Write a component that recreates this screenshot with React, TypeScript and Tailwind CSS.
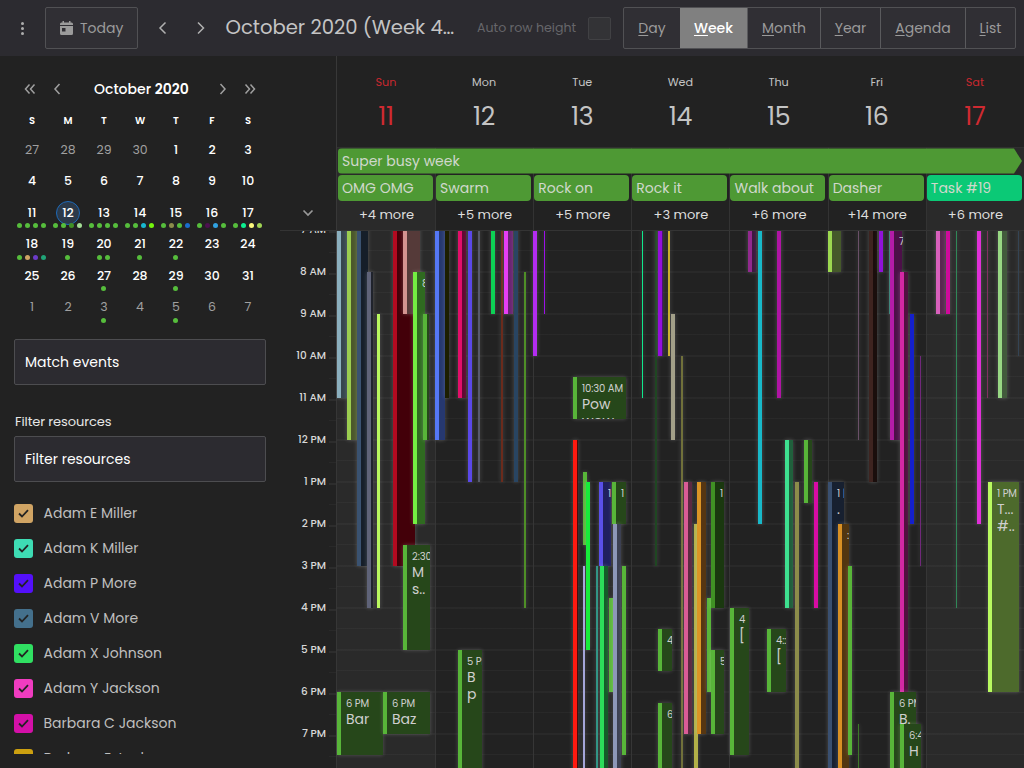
import React from "react";

type Ev = [number, number, number, number, number, string, string, string?, string?];

const G = "#58b539";
const D = "#26471a";

// left edge, bar width, total width, start hour, end hour, bar colour, fill colour, time, title
const events: Ev[] = [
  [1, 4, 10, 6.9, 11, "#8bafbe", "#36454d"],
  [11, 4, 10, 6.9, 12, "#9bcd50", "#4b582b"],
  [21, 4, 11, 6.9, 15, "#3a5270", "#151e29"],
  [31, 4, 6, 8, 16, "#5f6378", "#20232c"],
  [41, 3, 3, 9, 16, "#b9f75f", "#b9f75f"],
  [57, 4, 22, 6.9, 15, "#b40a20", "#430009"],
  [67, 4, 17, 6.9, 9, "#d49390", "#553a39"],
  [77, 4, 12, 8, 14, "#74ee42", "#2f6a20", "8"],
  [87, 4, 6, 9, 12, G, D],
  [99, 4, 10, 6.9, 12, "#5578f5", "#263870"],
  [109, 4, 4, 6.9, 11, "#1c1e00", "#1c1e00"],
  [122, 4, 8, 6.9, 11, "#e20f6a", "#5f0a33"],
  [132, 4, 4, 6.9, 13, "#5a48e8", "#24205f"],
  [142, 2, 2, 6.9, 13, "#575a6c", "#575a6c"],
  [155, 4, 4, 6.9, 9, "#0dd155", "#0dd155"],
  [165, 2, 2, 6.9, 13, "#6b2b1c", "#6b2b1c"],
  [168, 4, 9, 6.9, 9, "#e63ef5", "#6a2472"],
  [178, 4, 4, 6.9, 13, "#294562", "#294562"],
  [188, 2, 2, 8, 16, "#4f8f27", "#4f8f27"],
  [197, 4, 4, 6.9, 10, "#b32df0", "#b32df0"],
  [207.5, 1.5, 1.5, 6.9, 9, "#9b10e8", "#9b10e8"],
  [237, 4, 53, 10.5, 11.5, G, D, "10:30 AM", "Pow wow"],
  [237, 4, 5, 12, 21, "#ff1a10", "#4a0c0c"],
  [247, 4, 4, 12.75, 14.5, G, G],
  [247, 2, 2, 15, 21, "#a3a5d8", "#a3a5d8"],
  [250, 4, 4, 13, 17, "#17ec3a", "#17ec3a"],
  [260, 2, 2, 15, 21, "#2f9484", "#2f9484"],
  [263, 4, 12, 13, 15, "#5a50e8", "#20205f", "1"],
  [263.5, 4, 8.5, 15, 21, "#2cde5a", "#145c28"],
  [273, 4, 4, 15.75, 18, G, G],
  [276, 4, 14, 13, 14, G, D, "1"],
  [276.5, 4, 8.5, 14, 21, "#8d97b8", "#3c4052"],
  [286, 4, 4, 15, 19.5, G, G],
  [306, 1, 1, 6.9, 11, "#10e88c", "#10e88c"],
  [319, 2, 2, 6.9, 15, "#1f4722", "#1f4722"],
  [321.5, 4, 5, 6.9, 10, "#9310dc", "#471370"],
  [332, 2, 2, 6.9, 10, "#c9b02a", "#c9b02a"],
  [335, 4, 4, 9, 12, "#a29f88", "#a29f88"],
  [345, 2, 2, 10, 21, "#70703a", "#70703a"],
  [348, 4, 8, 13, 19, "#d95c96", "#5b2a42"],
  [358, 4, 4, 14, 21, "#b2b048", "#b2b048"],
  [361, 4, 9, 13, 19, "#dc9526", "#563612"],
  [371, 4, 4, 15.75, 18, G, G],
  [375, 4, 13, 13, 16, "#409124", "#1a380f", "1"],
  [375, 4, 13, 17, 19, G, D, "5"],
  [322, 4, 14, 16.5, 17.5, G, D, "4:30"],
  [322, 4, 14, 18.25, 21, G, D, "6:15"],
  [412, 4, 8, 6.9, 8, "#912a8e", "#3d1a40"],
  [422, 4, 4, 6.9, 14, "#18b8c8", "#18b8c8"],
  [441, 4, 4, 6.9, 11, "#b014a4", "#b014a4"],
  [449, 4, 8, 12, 16, "#3ee090", "#20603c"],
  [459, 4, 4, 13, 21, "#8c8c4a", "#8c8c4a"],
  [468, 4, 8, 12, 13.5, G, D],
  [478, 4, 4, 13, 16, "#d80ca4", "#d80ca4"],
  [394, 4, 19, 16, 19.5, G, D, "4", "["],
  [431, 4, 19, 16.5, 18, G, D, "4::", "["],
  [492, 4, 13, 6.9, 8, "#9cd850", "#45592a"],
  [522, 1, 1, 6.9, 12, "#6a5068", "#6a5068"],
  [533, 4, 8, 6.9, 13, "#3e2420", "#1a0e0c"],
  [543, 4, 4, 6.9, 8, "#9012d8", "#9012d8"],
  [553, 1, 1, 6.9, 9, "#2f7a70", "#2f7a70"],
  [554, 4, 12, 6.9, 12, "#b41ca8", "#4c1048"],
  [564, 4, 8, 8, 18, "#d428a4", "#521040"],
  [574, 4, 4, 9, 14, "#1420cc", "#1420cc"],
  [584, 1, 1, 10, 15, "#70287a", "#70287a"],
  [492, 4, 16, 13, 21, "#3a5070", "#172030", "1 |", "."],
  [502, 4, 11, 14, 21, "#d89024", "#523610", ":"],
  [512, 4, 4, 15, 19.5, G, G],
  [522, 1, 1, 18.75, 21, "#3c7828", "#3c7828"],
  [554, 4, 26, 18, 21, G, D, "6 PM", "B."],
  [564, 4, 21, 18.75, 21, G, D, "6:45", "H"],
  [600, 4, 9, 6.9, 9, "#d860bc", "#5a2850"],
  [610, 4, 4, 6.9, 9, "#d00a9c", "#d00a9c"],
  [620, 1, 1, 6.9, 16, "#308858", "#308858"],
  [641, 4, 4, 6.9, 14, "#e030d8", "#e030d8"],
  [651, 1, 1, 6.9, 11, "#803060", "#803060"],
  [662, 4, 9, 6.9, 11, "#98d884", "#425a3c"],
  [682, 1, 1, 6.9, 10, "#344454", "#344454"],
  [652, 4, 31, 13, 18, "#b9fa60", "#4d6a2c", "1 PM", "T...\n#.."],
  [67, 4, 27, 14.5, 17, G, D, "2:30", "M\ns.."],
  [122, 4, 24, 17, 21, G, D, "5 PM", "B\np"],
  [1, 4, 46, 18, 19.5, G, D, "6 PM", "Bar"],
  [47, 4, 47, 18, 19, G, D, "6 PM", "Baz"],
];

const HOUR = 42;

function EventBox({ e }: { e: Ev }) {
  const [x, bar, w, start, end, color, fill, time, title] = e;
  return (
    <div
      className="absolute overflow-hidden text-[#cfcfcf] shadow-[0_0_4px_rgba(255,255,255,0.22)]"
      style={{ left: x, width: w, top: (start - 7) * HOUR, height: (end - start) * HOUR, background: fill, borderLeft: `${bar}px solid ${color}` }}
    >
      {time && (
        <div className="w-max pl-[5px] pt-[4px]">
          <div className="text-[10px] leading-[15px] tracking-[-0.1px]">{time}</div>
          {title && <div className="w-[34px] whitespace-pre-wrap text-[14px] leading-[16.500px]">{title}</div>}
        </div>
      )}
    </div>
  );
}

const N = "#56bd3c";
const weeks: { d: number; out?: boolean; dots?: string[] }[][] = [
  [{ d: 27, out: true }, { d: 28, out: true }, { d: 29, out: true }, { d: 30, out: true }, { d: 1 }, { d: 2 }, { d: 3 }],
  [{ d: 4 }, { d: 5 }, { d: 6 }, { d: 7 }, { d: 8 }, { d: 9 }, { d: 10 }],
  [
    { d: 11, dots: [N, N, N, N] },
    { d: 12, dots: [N, N, "#409124", "#a3dd95"] },
    { d: 13, dots: [N, N, N, N] },
    { d: 14, dots: [N, N, "#18b8d0", "#74f50c"] },
    { d: 15, dots: [N, "#8c8c4a", N, "#1a6dcc"] },
    { d: 16, dots: [N, "#4c1050", "#30a2e0", N] },
    { d: 17, dots: [N, "#0cf090", "#fbf87c", "#a0d354"] },
  ],
  [
    { d: 18, dots: [N, "#d0a464", "#6b3bc8", "#20a478"] },
    { d: 19, dots: [N] },
    { d: 20, dots: [N, N] },
    { d: 21, dots: [N] },
    { d: 22, dots: [N] },
    { d: 23 },
    { d: 24 },
  ],
  [{ d: 25 }, { d: 26 }, { d: 27, dots: [N] }, { d: 28 }, { d: 29, dots: [N] }, { d: 30 }, { d: 31 }],
  [{ d: 1, out: true }, { d: 2, out: true }, { d: 3, out: true, dots: [N] }, { d: 4, out: true }, { d: 5, out: true, dots: [N] }, { d: 6, out: true }, { d: 7, out: true }],
];

const resources = [
  ["Adam E Miller", "#d0a464"],
  ["Adam K Miller", "#3edcb4"],
  ["Adam P More", "#5410fa"],
  ["Adam V More", "#44708c"],
  ["Adam X Johnson", "#30e062"],
  ["Adam Y Jackson", "#f03cc0"],
  ["Barbara C Jackson", "#d410a8"],
  ["Barbara E Jackson", "#cca010"],
];

const days = [
  ["Sun", "11", "OMG OMG", "+4 more"],
  ["Mon", "12", "Swarm", "+5 more"],
  ["Tue", "13", "Rock on", "+5 more"],
  ["Wed", "14", "Rock it", "+3 more"],
  ["Thu", "15", "Walk about", "+6 more"],
  ["Fri", "16", "Dasher", "+14 more"],
  ["Sat", "17", "Task #19", "+6 more"],
];

const views = [
  ["Day", "w-[56px]"],
  ["Week", "w-[67px]"],
  ["Month", "w-[73px]"],
  ["Year", "w-[60px]"],
  ["Agenda", "w-[85px]"],
  ["List", "w-[50px]"],
];

function Chevron({ d, w = 10, className = "" }: { d: string; w?: number; className?: string }) {
  return (
    <svg width={w} height="14" viewBox={`0 0 ${w} 14`} fill="none" stroke="currentColor" strokeWidth="1.5" className={className}>
      <path d={d} />
    </svg>
  );
}

function Toolbar() {
  return (
    <header className="flex h-14 shrink-0 items-center bg-[#2c2b30] text-[#9b9b9b]">
      <div className="ml-[21px] flex w-[3px] flex-col items-center gap-[2px]">
        <i className="size-[3px] rounded-full bg-[#adadad]" />
        <i className="size-[3px] rounded-full bg-[#adadad]" />
        <i className="size-[3px] rounded-full bg-[#adadad]" />
      </div>
      <button className="ml-[21px] flex h-[42px] w-[93px] items-center rounded-[2px] border border-[#515154] bg-[#302f34] pl-[14px] text-[14px]">
        <svg width="13" height="14" viewBox="0 0 13 14" fill="#9b9b9b">
          <path fillRule="evenodd" d="M2.500 0H4v1.500h5V0h1.500v1.500h1A1.500 1.500 0 0 1 13 3v1H0V3a1.500 1.500 0 0 1 1.500-1.500h1zM0 5h13v7.500a1.500 1.500 0 0 1-1.500 1.500h-10A1.500 1.500 0 0 1 0 12.500zM2 7v3.500h3.500V7z" />
        </svg>
        <span className="ml-[7px]">Today</span>
      </button>
      <Chevron d="M7.500 1.500L2 7L7.500 12.500" w={9} className="ml-5 text-[#b0b0b0]" />
      <Chevron d="M2 1.500L7.500 7L2 12.500" w={9} className="ml-[29px] text-[#b0b0b0]" />
      <h1 className="ml-[20.500px] w-[230.500px] whitespace-nowrap text-[19.600px] text-[#c4c4c4]">October 2020 (Week 4…</h1>
      <span className="ml-[21px] w-[100px] whitespace-nowrap text-[12.600px] text-[#66666a]">Auto row height</span>
      <span className="ml-[11px] size-[23px] rounded-[2px] border border-[#414144] bg-[#333336]" />
      <nav className="ml-[12px] flex h-[42px] rounded-[2px] border border-[#515154] bg-[#302f34] text-[14px]">
        {views.map(([v, w], i) => (
          <button
            key={v}
            className={`${w} ${v === "Week" ? "bg-[#808080] font-medium text-white" : ""} ${i > 1 ? "border-l border-[#5a5a5d]" : ""} shrink-0`}
          >
            <span className="underline underline-offset-2">{v[0]}</span>
            {v.slice(1)}
          </button>
        ))}
      </nav>
    </header>
  );
}

function Sidebar() {
  return (
    <aside className="flex w-[280px] shrink-0 flex-col text-white">
      <div className="mt-[23px] flex h-5 items-center text-[#a0a0a0]">
        <Chevron d="M5.500 2.500L1.500 7L5.500 11.500M10.500 2.500L6.500 7L10.500 11.500" w={12} className="ml-6" />
        <Chevron d="M6.500 2L2 7L6.500 12" w={8} className="ml-[17px]" />
        <div className="ml-[33px] w-[101px] whitespace-nowrap text-[14px] font-medium text-white">
          October <b className="font-semibold">2020</b>
        </div>
        <Chevron d="M1.500 2L6 7L1.500 12" w={8} className="ml-[24px]" />
        <Chevron d="M1.500 2.500L5.500 7L1.500 11.500M6.500 2.500L10.500 7L6.500 11.500" w={12} className="ml-[17px]" />
      </div>
      <div className="ml-[14px] mt-3 grid h-[18px] w-[252px] grid-cols-7 items-center text-center text-[10px] font-semibold">
        {["S", "M", "T", "W", "T", "F", "S"].map((d, i) => (
          <span key={i}>{d}</span>
        ))}
      </div>
      <div className="ml-[14px] mt-[5px] w-[252px]">
        {weeks.map((week, i) => (
          <div key={i} className="grid h-[31.500px] grid-cols-7">
            {week.map((c) => (
              <div key={c.d} className="flex flex-col items-center">
                <span
                  className={`${c.d === 12 ? "rounded-full border border-[#1d69b8] bg-[#2c3a4a]" : ""} ${
                    c.out ? "text-[#a0a0a0]" : "font-medium text-white"
                  } mt-1 flex size-6 shrink-0 items-center justify-center text-[12.500px]`}
                >
                  {c.d}
                </span>
                <span className="-mt-[2px] mr-px flex gap-[3px]">
                  {c.dots?.map((k, j) => (
                    <i key={j} className="size-[5px] rounded-full" style={{ background: k }} />
                  ))}
                </span>
              </div>
            ))}
          </div>
        ))}
      </div>
      <div className="ml-[14px] mt-[16px] flex h-[46px] w-[252px] shrink-0 items-center rounded-[2px] border border-[#4d4d50] bg-[#2c2b30] pl-[10px] text-[14px]">
        Match events
      </div>
      <div className="ml-[15px] mt-[27px] h-5 text-[13px] leading-5 tracking-[-0.1px] text-[#e6e6e6]">Filter resources</div>
      <div className="ml-[14px] mt-[4px] flex h-[46px] w-[252px] shrink-0 items-center rounded-[2px] border border-[#4d4d50] bg-[#2c2b30] pl-[10px] text-[14px]">
        Filter resources
      </div>
      <div className="ml-[14px] mt-[14px] h-[258px] shrink-0 overflow-hidden">
        {resources.map(([name, color]) => (
          <div key={name} className="flex h-[35px] items-center text-[14px] text-[#bfbfbf]">
            <span className="flex size-[19px] items-center justify-center rounded-[3px]" style={{ background: color }}>
              <svg width="11" height="9" viewBox="0 0 11 9" fill="none" stroke="#232323" strokeWidth="1.800">
                <path d="M1 4.500L4 7.500L10 1.200" />
              </svg>
            </span>
            <span className="ml-[10.500px]">{name}</span>
          </div>
        ))}
      </div>
    </aside>
  );
}

function Calendar() {
  return (
    <section className="flex min-w-0 flex-1 flex-col">
      <div className="flex h-[175px] shrink-0 border-b border-[#343434]">
        <div className="flex w-14 shrink-0 items-end justify-center pb-[11px]">
          <svg width="12" height="12" viewBox="0 0 12 12" fill="none" stroke="#999" strokeWidth="1.700">
            <path d="M1.500 3.500L6 8L10.500 3.500" />
          </svg>
        </div>
        <div className="relative grid flex-1 grid-cols-[99px_repeat(6,minmax(0,1fr))]">
          {days.map(([name, num, task, more], i) => {
            const weekend = i === 0 || i === 6;
            return (
              <div key={name} className={`${i === 0 ? "border-l border-[#383838]" : ""} flex flex-col items-center`}>
                <div className={`${weekend ? "text-[#c8282f]" : "text-[#c4c4c4]"} mt-[18px] h-4 text-[11.200px] leading-4`}>{name}</div>
                <div className={`${weekend ? "text-[#cf2a31]" : "text-[#c4c4c4]"} mt-[11px] h-8 text-[25.200px] leading-8 tracking-[-0.300px]`}>{num}</div>
                <div
                  className={`${weekend ? "bg-[#2a2a2a]" : ""} ${
                    i ? "border-l border-[#333333]" : "pl-[1px]"
                  } mt-[14px] flex w-full flex-1 flex-col border-t border-t-[#303030] pt-[27px]`}
                >
                  <div className={`${i === 6 ? "bg-[#0bc976]" : "bg-[#4e9934]"} flex h-[26px] w-[95px] shrink-0 items-center whitespace-nowrap rounded-[4px] pl-1 text-[14px] text-[#d0d8cc]`}>
                    {task}
                  </div>
                  <div className="mt-[5px] text-center text-[13px] leading-[18px] text-[#dedede]">{more}</div>
                </div>
              </div>
            );
          })}
          <div className="absolute left-[2px] top-[92px] flex h-[26px] w-[684px] items-center rounded-l-[4px] bg-[#4e9934] pl-1 text-[14px] text-[#d0d8cc] [clip-path:polygon(0_0.500px,676px_0.500px,100%_50%,676px_25.500px,0_25.500px)]">
            Super busy week
          </div>
        </div>
      </div>
      <div className="flex min-h-0 flex-1 overflow-hidden">
        <div className="-mt-[11px] w-14 shrink-0 [clip-path:inset(11px_0_0_0)]">
          {["7 AM", "8 AM", "9 AM", "10 AM", "11 AM", "12 PM", "1 PM", "2 PM", "3 PM", "4 PM", "5 PM", "6 PM", "7 PM"].map((t) => (
            <div key={t} className="flex h-[42px] justify-end bg-[linear-gradient(#2d2d2d,#2d2d2d),linear-gradient(#292929,#292929)] bg-[length:7px_2px,7px_1px] bg-[position:right_0_top_11px,right_0_top_32px] bg-no-repeat pr-[10px] text-[10.500px] font-medium leading-[19px] text-[#d8d8d8]">
              {t}
            </div>
          ))}
        </div>
        <div className="relative -mt-px flex-1 overflow-hidden [clip-path:inset(1px_0_0_0)]">
          <div className="grid h-full grid-cols-[99px_repeat(6,minmax(0,1fr))]">
            {days.map(([name], i) => (
              <div
                key={name}
                className={`${
                  i === 0 || i === 6 ? "bg-[#2a2a2a]" : "bg-[#222222]"
                } border-l border-[#363636] bg-[repeating-linear-gradient(to_bottom,#ffffff08_0,#ffffff08_1px,transparent_1px,transparent_20px,#ffffff08_20px,#ffffff08_21px,transparent_21px,transparent_41px,#ffffff08_41px,#ffffff08_42px)]`}
              />
            ))}
          </div>
          {events.map((e, i) => (
            <EventBox key={i} e={e} />
          ))}
          <div className="absolute left-[563px] top-[4px] w-[4px] overflow-hidden text-[10px] leading-[15px] text-[#cfcfcf]">7</div>
        </div>
      </div>
    </section>
  );
}

export default function App() {
  return (
    <div className="flex h-[768px] w-[1024px] flex-col overflow-hidden bg-[#222222] font-['Poppins','Inter',sans-serif]">
      <Toolbar />
      <div className="flex min-h-0 flex-1">
        <Sidebar />
        <Calendar />
      </div>
    </div>
  );
}
